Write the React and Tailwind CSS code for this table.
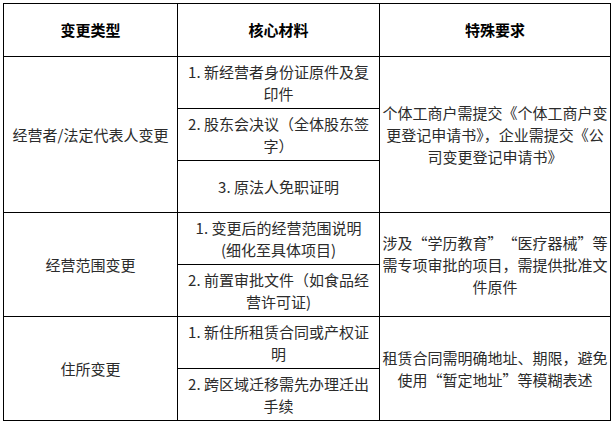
const rows = [
  {
    type: "经营者/法定代表人变更",
    items: [
      ["1. 新经营者身份证原件及复", "印件"],
      ["2. 股东会决议（全体股东签", "字）"],
      ["3. 原法人免职证明"],
    ],
    note: ["个体工商户需提交《个体工商户变", "更登记申请书》，企业需提交《公", "司变更登记申请书》"],
  },
  {
    type: "经营范围变更",
    items: [
      ["1. 变更后的经营范围说明", "(细化至具体项目)"],
      ["2. 前置审批文件（如食品经", "营许可证)"],
    ],
    note: ["涉及“学历教育”“医疗器械”等", "需专项审批的项目，需提供批准文", "件原件"],
  },
  {
    type: "住所变更",
    items: [
      ["1. 新住所租赁合同或产权证", "明"],
      ["2. 跨区域迁移需先办理迁出", "手续"],
    ],
    note: ["租赁合同需明确地址、期限，避免", "使用“暂定地址”等模糊表述"],
  },
];

// curly quotes take a full em, like the CJK font in the picture
function Quoted({ text }) {
  return text.split(/([“”])/).map((part, i) => {
    if (part === "“") return <span key={i} className="inline-block w-[15px] text-right">“</span>;
    if (part === "”") return <span key={i} className="inline-block w-[15px] text-left">”</span>;
    return part;
  });
}

function Lines({ lines }) {
  return lines.map((l, i) => (
    <span key={i} className="block whitespace-nowrap">
      <Quoted text={l} />
    </span>
  ));
}

export default function App() {
  return (
    <div
      lang="zh-CN"
      className="w-[614px] h-[422px] bg-white pl-[3px] pt-[3px] overflow-hidden"
      style={{ fontFamily: '"Noto Sans CJK SC", "Noto Sans", sans-serif' }}
    >
      <table className="border-collapse table-fixed w-[607px] text-[15px] leading-[22px] text-[#2b2b2b]">
        <colgroup>
          <col className="w-[174px]" />
          <col className="w-[202px]" />
          <col className="w-[231px]" />
        </colgroup>
        <thead>
          <tr className="h-[53px]">
            <th className="border border-black font-bold text-black text-center">变更类型</th>
            <th className="border border-black font-bold text-black text-center">核心材料</th>
            <th className="border border-black font-bold text-black text-center">特殊要求</th>
          </tr>
        </thead>
        <tbody>
          {rows.map((r) =>
            r.items.map((item, i) => (
              <tr key={r.type + i} className="h-[52px]">
                {i === 0 && (
                  <td rowSpan={r.items.length} className="border border-black text-center align-middle px-1">
                    {r.type}
                  </td>
                )}
                <td className="border border-black text-center align-middle px-1 py-[3px]">
                  <Lines lines={item} />
                </td>
                {i === 0 && (
                  <td rowSpan={r.items.length} className="border border-black text-center align-middle px-[2px]">
                    <Lines lines={r.note} />
                  </td>
                )}
              </tr>
            ))
          )}
        </tbody>
      </table>
    </div>
  );
}
